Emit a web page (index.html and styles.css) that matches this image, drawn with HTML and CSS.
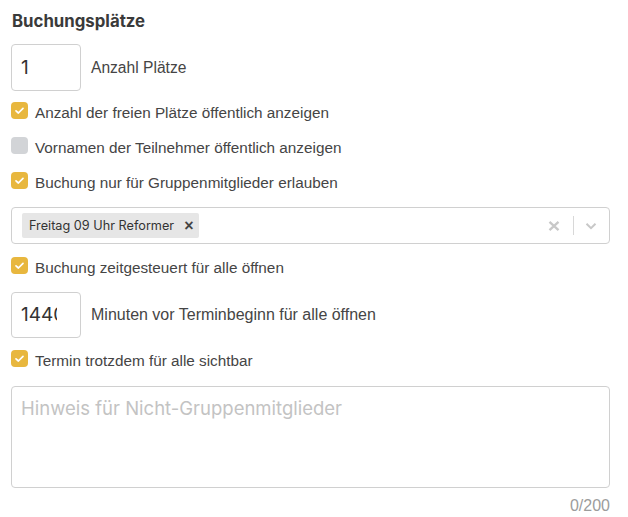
FILE: index.html
```html
<!DOCTYPE html>
<html lang="de">
<head>
<meta charset="utf-8">
<link rel="stylesheet" href="styles.css">
</head>
<body>
<div class="form">
  <h2 class="title">Buchungsplätze</h2>

  <div class="num-row num-row1">
    <div class="num-input"><span class="num-val">1</span></div>
    <span class="num-label lbl1">Anzahl Plätze</span>
  </div>

  <div class="check-row row-a">
    <span class="cb on"><svg viewBox="0 0 17 17"><path d="M5 8.8l2.4 2.2 4.6-4.6"/></svg></span>
    <span class="label">Anzahl der freien Plätze öffentlich anzeigen</span>
  </div>
  <div class="check-row">
    <span class="cb"></span>
    <span class="label">Vornamen der Teilnehmer öffentlich anzeigen</span>
  </div>
  <div class="check-row">
    <span class="cb on"><svg viewBox="0 0 17 17"><path d="M5 8.8l2.4 2.2 4.6-4.6"/></svg></span>
    <span class="label">Buchung nur für Gruppenmitglieder erlauben</span>
  </div>

  <div class="select">
    <div class="chips">
      <span class="chip">Freitag 09 Uhr Reformer<span class="chip-x">×</span></span>
    </div>
    <div class="indicators">
      <svg class="clear" viewBox="0 0 20 20"><path d="M5.5 5.8l9 8.4M14.5 5.8l-9 8.4"/></svg>
      <span class="sep"></span>
      <svg class="chev" viewBox="0 0 20 20"><path d="M5.5 7.8l4.5 4.4 4.5-4.4"/></svg>
    </div>
  </div>

  <div class="check-row row-d">
    <span class="cb on"><svg viewBox="0 0 17 17"><path d="M5 8.8l2.4 2.2 4.6-4.6"/></svg></span>
    <span class="label">Buchung zeitgesteuert für alle öffnen</span>
  </div>

  <div class="num-row num-row2">
    <div class="num-input short"><span class="num-val clip">1440</span></div>
    <span class="num-label lbl2">Minuten vor Terminbeginn für alle öffnen</span>
  </div>

  <div class="check-row row-e">
    <span class="cb on"><svg viewBox="0 0 17 17"><path d="M5 8.8l2.4 2.2 4.6-4.6"/></svg></span>
    <span class="label">Termin trotzdem für alle sichtbar</span>
  </div>

  <div class="textarea"><span class="placeholder">Hinweis für Nicht-Gruppenmitglieder</span></div>
  <div class="counter">0/200</div>
</div>
</body>
</html>
```

FILE: styles.css
```css
html, body {
  margin: 0;
  padding: 0;
  background: #ffffff;
}
body {
  font-family: "Liberation Sans", Arial, sans-serif;
  color: #454545;
}
.form {
  padding: 10px 18px 0 11px;
  display: flex;
  flex-direction: column;
}
.title {
  font-family: Inter, "Liberation Sans", sans-serif;
  font-size: 16.8px;
  font-weight: 700;
  color: #3a3a3a;
  margin: 0 0 0 1px;
  line-height: 22px;
}

/* number inputs */
.num-row {
  display: flex;
  align-items: center;
}
.num-row1 {
  margin-top: 12px;
}
.num-row2 {
  margin-top: 15px;
}
.num-input {
  box-sizing: border-box;
  width: 70px;
  height: 47px;
  border: 1px solid #d0d0d0;
  border-radius: 4px;
  padding: 0 9px;
  display: flex;
  align-items: center;
  flex: none;
}
.num-input.short {
  height: 46px;
}
.num-val {
  font-family: Inter, "Liberation Sans", sans-serif;
  font-size: 19px;
  line-height: 24px;
  color: #333333;
  white-space: nowrap;
}
.num-val.clip {
  display: block;
  width: 36px;
  overflow: hidden;
}
.num-label {
  margin-left: 10px;
  color: #454545;
}
.lbl1 {
  font-size: 15.6px;
}
.lbl2 {
  font-size: 16px;
}

/* checkbox rows */
.check-row {
  display: flex;
  align-items: flex-start;
  margin-top: 15px;
}
.row-a {
  margin-top: 11px;
}
.row-d {
  margin-top: 13px;
}
.row-e {
  margin-top: 12px;
}
.check-row .label {
  margin-left: 7px;
  padding-top: 2px;
  font-size: 15.3px;
  line-height: 18px;
  color: #454545;
}
.cb {
  width: 17px;
  height: 17px;
  border-radius: 4px;
  background: #d2d4d7;
  display: flex;
  flex: none;
}
.cb.on {
  background: #e8b73e;
}
.cb svg {
  width: 17px;
  height: 17px;
  fill: none;
  stroke: #ffffff;
  stroke-width: 1.7;
  stroke-linecap: round;
  stroke-linejoin: round;
}

/* multi select */
.select {
  box-sizing: border-box;
  margin-top: 15px;
  height: 37px;
  border: 1px solid #d0d0d0;
  border-radius: 4px;
  display: flex;
  align-items: center;
  justify-content: space-between;
  padding: 0 8px 0 10px;
}
.chips {
  display: flex;
}
.chip {
  font-family: Inter, "Liberation Sans", sans-serif;
  background: #e6e6e6;
  border-radius: 2px;
  font-size: 12.7px;
  color: #333333;
  height: 25px;
  padding: 0 6px 0 7px;
  display: flex;
  align-items: center;
}
.chip-x {
  font-family: "Liberation Sans", Arial, sans-serif;
  margin-left: 10px;
  font-size: 16px;
  font-weight: 700;
  color: #444444;
  line-height: 16px;
}
.indicators {
  display: flex;
  align-items: center;
}
.indicators svg {
  width: 20px;
  height: 20px;
  fill: none;
  stroke: #c8c8c8;
  stroke-width: 2;
}
.indicators .clear {
  stroke-width: 2.3;
}
.sep {
  width: 1px;
  height: 19px;
  background: #d8d8d8;
  margin: 0 7px 0 9px;
}

/* textarea */
.textarea {
  box-sizing: border-box;
  margin-top: 16px;
  height: 102px;
  border: 1px solid #d0d0d0;
  border-radius: 4px;
  padding: 10px 9px;
}
.placeholder {
  font-family: Inter, "Liberation Sans", sans-serif;
  font-size: 18.5px;
  color: #c3c3c3;
}
.counter {
  text-align: right;
  font-size: 16px;
  line-height: 18px;
  color: #9c9c9c;
  margin-top: 9px;
}
```
